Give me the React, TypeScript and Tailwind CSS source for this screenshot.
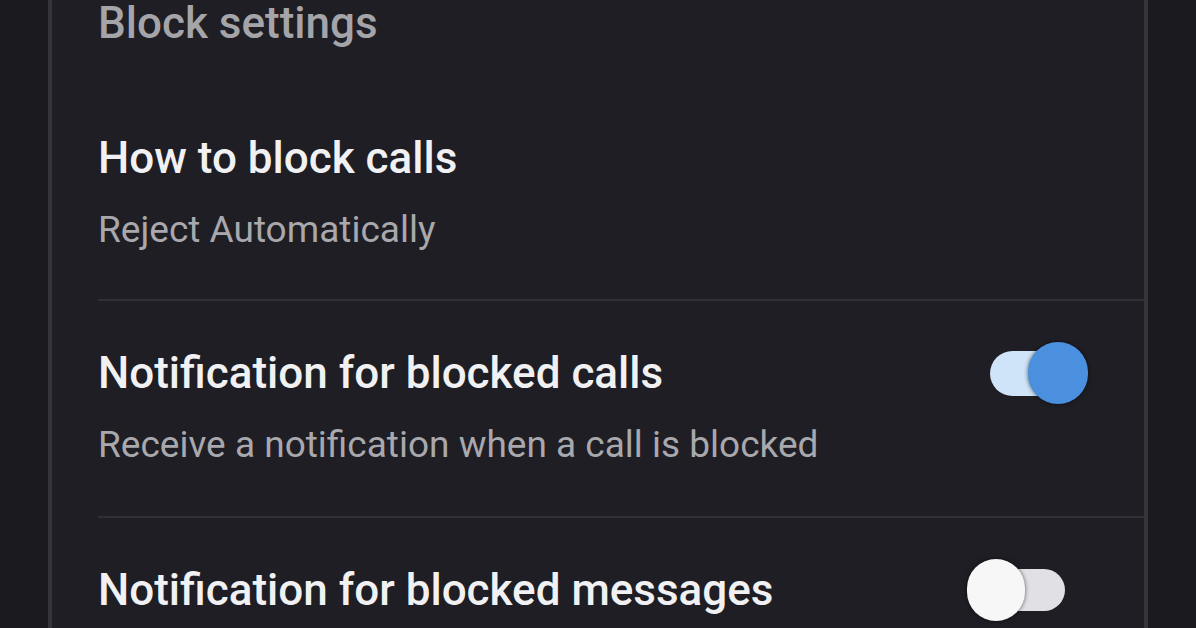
import React from 'react';

// Dark settings screen: block settings list with toggles
function Toggle({ on }: { on: boolean }) {
  if (on) {
    return (
      <div className="relative h-[62px] w-[98px] shrink-0">
        <div className="absolute left-0 top-[9px] h-[45px] w-[70px] rounded-full bg-[#cfe4f8]" />
        <div className="absolute right-0 top-0 h-[62px] w-[60px] rounded-full bg-[#4a90df] shadow-[0_0_4px_rgba(0,0,0,0.6)]" />
      </div>
    );
  }
  return (
    <div className="relative mr-[23px] h-[62px] w-[98px] shrink-0">
      <div className="absolute right-0 top-[10px] h-[42px] w-[70px] rounded-full bg-[#e1e1e5]" />
      <div className="absolute left-0 top-0 h-[62px] w-[58px] rounded-full bg-[#f7f7f8] shadow-[0_0_4px_rgba(0,0,0,0.6)]" />
    </div>
  );
}

function Row({ title, subtitle, toggle }: { title: string; subtitle?: string; toggle?: boolean }) {
  return (
    <div className="flex flex-col pr-[56px]">
      <div className="flex h-[52px] items-center justify-between">
        <span className="whitespace-nowrap text-[44px] font-medium leading-[52px] text-[#f1f1f3]">{title}</span>
        {toggle !== undefined && <Toggle on={toggle} />}
      </div>
      {subtitle && (
        <span className="mt-[24px] whitespace-nowrap text-[37px] leading-[44px] text-[#a8a8ad]">{subtitle}</span>
      )}
    </div>
  );
}

export default function App() {
  return (
    <div
      className="h-[628px] w-[1196px] overflow-hidden bg-[#1b1b1f]"
      style={{ fontFamily: 'Roboto, "Noto Sans", sans-serif' }}
    >
      <div className="ml-[48px] h-full w-[1100px] border-x-4 border-[#34343b] bg-[#1e1e24]">
        <div className="pl-[46px]">
          <div className="text-[44px] font-medium leading-[46px] text-[#a4a4a9]">Block settings</div>

          <div className="mt-[86px] pb-[47px]">
            <Row title="How to block calls" subtitle="Reject Automatically" />
          </div>
          <div className="border-t-2 border-[#2f2f36]" />

          <div className="pt-[46px] pb-[49px]">
            <Row title="Notification for blocked calls" subtitle="Receive a notification when a call is blocked" toggle={true} />
          </div>
          <div className="border-t-2 border-[#2f2f36]" />

          <div className="pt-[46px]">
            <Row title="Notification for blocked messages" toggle={false} />
          </div>
        </div>
      </div>
    </div>
  );
}
